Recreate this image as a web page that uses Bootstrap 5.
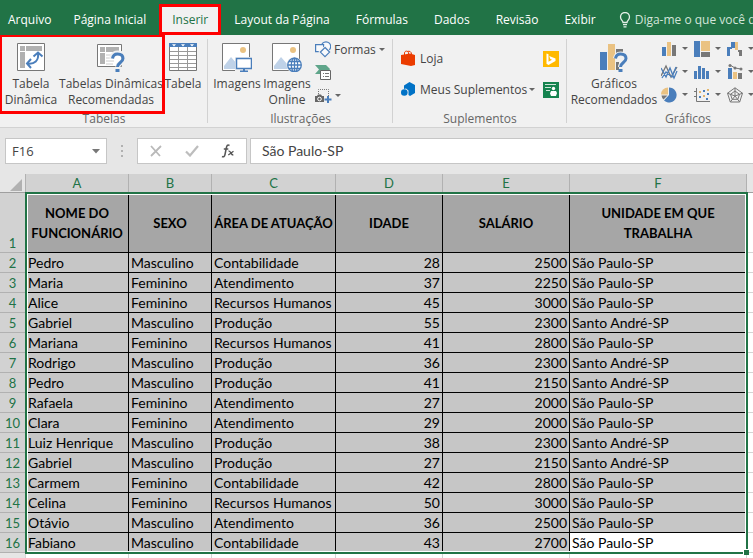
<!DOCTYPE html>
<html lang="pt-BR">
<head>
<meta charset="utf-8">
<meta name="viewport" content="width=device-width, initial-scale=1">
<title>Planilha de funcionários</title>
<link href="https://cdn.jsdelivr.net/npm/bootstrap@5.3.0/dist/css/bootstrap.min.css" rel="stylesheet">
<style>
  :root { --xl-green: #217346; --xl-ribbon: #f1f1f1; --xl-gray: #e6e6e6; }
  body { font-family: "Open Sans", "Noto Sans", sans-serif; font-size: 12px; line-height: 16px; color: #444; background: var(--xl-gray); overflow-x: hidden; }
  button, input { font: inherit; color: inherit; }
  svg { display: block; flex: none; }
  .tabs-bar { background: var(--xl-green); height: 35px; padding-top: 6px; overflow: hidden; }
  .tabs-bar a { color: #fff; text-decoration: none; padding: 6px 13px 7px; white-space: nowrap; }
  .tabs-bar a:first-child { padding-left: 8px; padding-right: 9px; }
  .tabs-bar a.current { background: var(--xl-ribbon); color: var(--xl-green); outline: 3px solid #f00; outline-offset: -1px; margin: 0 2px; padding: 6px 11px 5px; height: 27px; }
  .tabs-bar .tell-me { color: #d3e5da; padding: 0 0 2px 10px; }
  .ribbon { background: var(--xl-ribbon); border-bottom: 1px solid #d2d2d2; height: 93px; overflow: hidden; }
  .ribbon-group { flex: none; position: relative; padding-top: 8px; }
  .ribbon-group + .ribbon-group::before { content: ""; position: absolute; left: -1px; top: 4px; bottom: 4px; width: 1px; background: #d2d2d2; }
  .group-name { color: #666; text-align: center; height: 16px; margin-bottom: 0; }
  .group-body { height: 68px; }
  .g-tables { width: 208px; } .g-illus { width: 185px; } .g-addins { width: 174px; } .g-charts { width: 242px; }
  .tool { background: none; border: 0; padding: 0; display: flex; align-items: center; white-space: nowrap; }
  .tool-big { flex-direction: column; justify-content: flex-start; line-height: 16px; flex: none; }
  .tool-big svg { margin-bottom: 4px; }
  .w-a { width: 62px; } .w-b { width: 98px; } .w-c { width: 46px; } .w-d { width: 50px; } .w-e { width: 94px; }
  .caret { width: 0; height: 0; border: 3px solid transparent; border-top-color: #666; border-bottom: 0; flex: none; }
  .marked { position: absolute; left: -1px; top: -1px; width: 166px; height: 80px; border: 3px solid #f00; pointer-events: none; z-index: 2; }
  .small-tools { margin-top: -5px; padding-left: 3px; }
  .small-tools .tool { height: 23px; gap: 3px; }
  .addin-row { height: 31px; }
  .chart-grid { display: grid; grid-template-columns: repeat(3, 33px); grid-auto-rows: 23px; margin-top: -6px; }
  .chart-grid .tool { gap: 4px; }
  .formula-row { height: 46px; padding: 10px 0 10px 5px; }
  .field { background: #fff; border: 1px solid #c6c6c6; height: 26px; }
  .field input { border: 0; background: none; outline: 0; min-width: 0; padding: 0; }
  .name-box { width: 102px; padding: 0 6px; font-size: 13px; }
  .fx-box { width: 110px; padding: 0 11px; margin-right: 3px; }
  .formula { border-right: 0; padding-left: 11px; font-family: Lato, "Open Sans", sans-serif; font-size: 14px; }
  .dots { margin: 0 14px; width: 2px; }
  .sheet { font-family: Lato, "Open Sans", sans-serif; font-size: 14px; line-height: 18px; position: relative; overflow: hidden; }
  .sheet table { table-layout: fixed; width: 100%; min-width: 753px; border-collapse: separate; border-spacing: 0; color: #000; }
  .c-num { width: 26px; } .c-a { width: 103px; } .c-b { width: 83px; } .c-c { width: 124px; } .c-d { width: 107px; } .c-e { width: 127px; } .c-f { width: 177px; }
  .sheet th, .sheet td { padding: 0; white-space: nowrap; overflow: hidden; }
  .sheet th { font-size: 13px; }
  .sheet thead th { height: 19px; background: #d2d2d2; color: var(--xl-green); font-weight: 400; text-align: center; border-right: 1px solid #b1b1b1; border-bottom: 1px solid #9f9f9f; }
  .sheet thead th:first-child, .sheet thead th:last-child { background: var(--xl-gray); }
  .sheet thead th:last-child { border-right: 0; }
  .sheet thead svg { margin: 3px 0 0 10px; }
  .sheet tbody th { background: #d2d2d2; color: var(--xl-green); font-weight: 400; text-align: center; vertical-align: bottom; border-right: 1px solid #9f9f9f; border-bottom: 1px solid #b1b1b1; }
  .sheet tbody td { background: #c6c6c6; height: 20px; padding-left: 2px; border-right: 1px solid #000; border-bottom: 1px solid #000; }
  .sheet tbody td:nth-child(5), .sheet tbody td:nth-child(6) { text-align: right; padding-right: 2px; }
  .sheet tbody td:last-child { background: #fff; border-right: 0; border-bottom-color: #d4d4d4; }
  .sheet tbody .titles td { height: 60px; background: #a6a6a6; font-size: 13px; font-weight: 700; text-align: center; vertical-align: middle; line-height: 20px; padding: 0; white-space: normal; }
  .sheet tbody .titles td:last-child { background: #fff; }
  .sheet tbody td.active-cell { background: #fff; }
  .sheet tbody .blank td, .sheet tbody .blank th { height: 5px; background: #fff; border-bottom: 0; border-right-color: #d4d4d4; }
  .sheet tbody .blank th { background: var(--xl-gray); }
  .selection { position: absolute; left: 25px; top: 18px; bottom: 4px; width: 723px; border: 2px solid var(--xl-green); box-shadow: inset 0 0 0 1px #fff; pointer-events: none; }
  .selection::after { content: ""; position: absolute; right: -3px; bottom: -3px; width: 6px; height: 6px; background: var(--xl-green); border: solid #fff; border-width: 1px 0 0 1px; }
</style>
<script src="https://cdn.jsdelivr.net/npm/bootstrap@5.3.0/dist/js/bootstrap.bundle.min.js"></script>
</head>
<body>
<nav class="tabs-bar d-flex align-items-start" aria-label="Guias">
  <a href="#">Arquivo</a><a href="#">Página Inicial</a><a href="#" class="current" aria-current="page">Inserir</a><a href="#">Layout da Página</a><a href="#">Fórmulas</a><a href="#">Dados</a><a href="#">Revisão</a><a href="#">Exibir</a>
  <button class="tool tell-me align-self-center gap-1" type="button">
    <svg width="12" height="16" viewBox="0 0 12 16" fill="none" stroke="#e4efe8" stroke-width="1.3"><path d="M4 10.5C4 8.5 1.5 8 1.500 5a4.500 4.500 0 0 1 9 0c0 3-2.500 3.500-2.500 5.500zM4 12.700h4M4.500 14.800h3"/></svg>
    <span>Diga-me o que você d</span></button>
</nav>

<main>
<div class="ribbon d-flex">
  <section class="ribbon-group g-tables">
    <div class="marked"></div>
    <div class="group-body d-flex align-items-start">
      <button class="tool tool-big w-a" type="button">
        <svg width="28" height="29" viewBox="0 0 28 29"><path d="M.5.500h27v27H.5z" fill="#fff" stroke="#777"/><path d="M3 3h5v5H3zm6 0h16v5H9zM3 9h5v16H3z" fill="#b1b1b1"/><path d="M10.500 20.500c7 1 11.500-3 10.500-10" fill="none" stroke="#4a7ebb" stroke-width="2"/><path d="M16.500 13.500l4.500-4 4.500 4M14 16l-4 4.500 4 4.500" fill="none" stroke="#4a7ebb" stroke-width="2"/></svg>
        <span>Tabela</span><span>Dinâmica</span></button>
      <button class="tool tool-big w-b" type="button">
        <svg width="28" height="29" viewBox="0 0 28 29"><path d="M.5 1.500h24v22H.5z" fill="#fff" stroke="#777"/><path d="M3 4h5v5H3zm6 0h13v5H9zM3 10h5v11H3z" fill="#b1b1b1"/><path d="M9 12h7M9 15h6M9 18h8M9 21h7" stroke="#ccc"/><path d="M15 16v-2c1-3 3-4 6-4 4 0 6 2 6 5 0 5-5 4-6 8v2" fill="none" stroke="#f1f1f1" stroke-width="5"/><path d="M15.500 15.500c.5-3 2.500-4.500 5-4.500 3.500 0 5.500 1.500 5.500 4.500 0 4-5.500 4-5.500 8.500" fill="none" stroke="#4a7ebb" stroke-width="3"/><path d="M18.500 26h4v3h-4z" fill="#4a7ebb"/></svg>
        <span>Tabelas Dinâmicas</span><span>Recomendadas</span></button>
      <button class="tool tool-big w-c" type="button">
        <svg width="28" height="29" viewBox="0 0 28 29"><path d="M.5.500h27v27H.5z" fill="#fff" stroke="#777"/><path d="M0 0h28v4H0z" fill="#4a7ebb"/><path d="M3 1.200h4L5 3.400zm9 0h4l-2 2.200zm9 0h4l-2 2.200z" fill="#fff"/><path d="M1 8.500h26M1 12.500h26M1 16.500h26M1 20.500h26M1 24.500h26M9.500 4v23M18.500 4v23" stroke="#999"/></svg>
        <span>Tabela</span></button>
    </div>
    <p class="group-name">Tabelas</p>
  </section>

  <section class="ribbon-group g-illus">
    <div class="group-body d-flex align-items-start ps-1">
      <button class="tool tool-big w-d" type="button">
        <svg width="30" height="29" viewBox="0 0 30 29"><path d="M.5.500h27v27H.5z" fill="#fff" stroke="#777"/><circle cx="21" cy="7" r="3" fill="#eac282"/><path d="M2 26v-3l7-9 7 8v4z" fill="#bfd2e8"/><path d="M13 14h17v15H13z" fill="#f1f1f1"/><path d="M14.500 15.500h15v10h-15z" fill="#fff" stroke="#4a7ebb" stroke-width="1.500"/><path d="M21 26h2v1.500h3V29h-8v-1.500h3z" fill="#4a7ebb"/></svg>
        <span>Imagens</span></button>
      <button class="tool tool-big w-d" type="button">
        <svg width="30" height="29" viewBox="0 0 30 29"><path d="M.5.500h27v27H.5z" fill="#fff" stroke="#777"/><circle cx="21" cy="7" r="3" fill="#eac282"/><path d="M2 26v-3l7-9 7 8v4z" fill="#bfd2e8"/><circle cx="22.500" cy="22" r="8" fill="#f1f1f1"/><g fill="#fff" stroke="#4a7ebb" stroke-width="1.300"><circle cx="22.500" cy="22" r="6.800"/><ellipse cx="22.500" cy="22" rx="3.200" ry="6.800"/><path d="M22.500 15v14M16 22h13M17 18.500h11M17 25.500h11"/></g></svg>
        <span>Imagens</span><span>Online</span></button>
      <div class="small-tools">
        <button class="tool" type="button">
          <svg width="16" height="17" viewBox="0 0 16 17" fill="#f8fafc" stroke="#4a7ebb" stroke-width="1.200"><circle cx="11" cy="5.500" r="4.700"/><path d="M.6 3.600h8v7h-8z"/><path d="M10 6.500l4.600 4.600L10 15.700l-4.600-4.600z" stroke="#f1f1f1" stroke-width="3"/><path d="M10 6.500l4.600 4.600L10 15.700l-4.600-4.600z"/></svg>
          <span>Formas</span><i class="caret"></i></button>
        <button class="tool" type="button" aria-label="SmartArt">
          <svg width="17" height="17" viewBox="0 0 17 17"><path d="M0 1h11l4 4-1 2H5v3H0l4-4.500z" fill="#5fa58a"/><path d="M5.500 6.500h10v9h-10z" fill="#fff" stroke="#666"/><path d="M8 9.500h1M8 12.500h1M10 9.500h4M10 12.500h4" stroke="#777"/></svg></button>
        <button class="tool" type="button" aria-label="Instantâneo">
          <svg width="17" height="17" viewBox="0 0 17 17"><path d="M3.500 7V2.500h10V9" fill="none" stroke="#777" stroke-dasharray="1 1"/><path d="M0 9h2l1-1.500h3L7 9h2v6H0z" fill="#666"/><circle cx="4.500" cy="12" r="1.800" fill="#666" stroke="#fff"/><path d="M12 9h2v2.500h2.500v2H14V16h-2v-2.500H9.500v-2H12z" fill="#4a7ebb"/></svg><i class="caret"></i></button>
      </div>
    </div>
    <p class="group-name">Ilustrações</p>
  </section>

  <section class="ribbon-group g-addins">
    <div class="group-body ps-2 pe-2">
      <div class="addin-row d-flex justify-content-between">
        <button class="tool gap-1" type="button">
          <svg width="15" height="17" viewBox="0 0 15 17"><path d="M0 5l9-1.500 5 1.500v10l-4 1L0 14z" fill="#eb3c00"/><path d="M3.500 6V3c0-2.500 4-2.500 4 0v2M6.500 1.500C8.500.5 10.500 2 10.500 4" fill="none" stroke="#eb3c00"/></svg>
          <span>Loja</span></button>
        <button class="tool" type="button" aria-label="Bing Mapas">
          <svg width="16" height="16" viewBox="0 0 16 16"><path d="M0 0h16v16H0z" fill="#ffb900"/><path d="M3.500 2.500l2 .8v7.400l3.500-2-1.700-.8L6.200 5l6.300 2.400v2.700L5.500 14l-2-1.300z" fill="#fff"/></svg></button>
      </div>
      <div class="addin-row d-flex justify-content-between">
        <button class="tool gap-1" type="button">
          <svg width="15" height="15" viewBox="0 0 15 15"><path d="M3 3.500L8.500 0 14 3v8l-5 3-1.500-1V8.500L5 6.500 3 7z" fill="#0072c6"/><circle cx="3.300" cy="10.500" r="3.300" fill="#0072c6"/></svg>
          <span>Meus Suplementos</span></button><button class="tool ms-auto me-2" type="button" aria-label="Abrir Meus Suplementos"><i class="caret"></i></button>
        <button class="tool" type="button" aria-label="Gráfico de pessoas">
          <svg width="16" height="16" viewBox="0 0 16 16"><path d="M0 0h16v16H0z" fill="#15834f"/><path d="M2 2.500h11M2 5.500h6M3 8.500h4" stroke="#cfe6da"/><circle cx="10.500" cy="6.500" r="1.700" fill="#fff"/><path d="M8 9h5l1 2-1 3H8l-1-2.500z" fill="#fff"/></svg></button>
      </div>
    </div>
    <p class="group-name">Suplementos</p>
  </section>

  <section class="ribbon-group g-charts">
    <div class="group-body d-flex align-items-start">
      <button class="tool tool-big w-e" type="button">
        <svg width="28" height="29" viewBox="0 0 28 29"><path d="M0 9h7v18H0z" fill="#4a7ebb"/><path d="M8 1h7v26H8z" fill="#eac282"/><path d="M16 6h7v4h-7zm0 13h3v8h-3z" fill="#777"/><path d="M15.500 15.500c.5-3 2.500-4.500 5-4.500 3.500 0 5.500 1.500 5.500 4.500 0 4-5.500 4-5.500 8.500" fill="none" stroke="#f1f1f1" stroke-width="5"/><path d="M15.500 15.500c.5-3 2.500-4.500 5-4.500 3.500 0 5.500 1.500 5.500 4.500 0 4-5.500 4-5.500 8.500" fill="none" stroke="#4a7ebb" stroke-width="3"/><path d="M18.500 26h4v3h-4z" fill="#4a7ebb"/></svg>
        <span>Gráficos</span><span>Recomendados</span></button>
      <div class="chart-grid">
        <button class="tool" type="button" aria-label="Colunas"><svg width="17" height="16" viewBox="0 0 17 16"><path d="M1 6h4v9H1z" fill="#4a7ebb"/><path d="M6 1h4v14H6z" fill="#eac282"/><path d="M11 4h4v11h-4z" fill="#777"/></svg><i class="caret"></i></button>
        <button class="tool" type="button" aria-label="Hierarquia"><svg width="17" height="16" viewBox="0 0 17 16"><path d="M0 0h6v16H0z" fill="#4a7ebb"/><path d="M7 0h9v10H7z" fill="#eac282"/><path d="M7 11h9v5H7z" fill="#777"/></svg><i class="caret"></i></button>
        <button class="tool" type="button" aria-label="Cascata"><svg width="17" height="16" viewBox="0 0 17 16"><path d="M0 6h3v9H0zm0 0h5v2H0z" fill="#4a7ebb"/><path d="M4 1h4v6H4z" fill="#4a7ebb"/><path d="M8 1h3v8H8z" fill="#eac282"/><path d="M11 9h4v6h-3v-4h-1z" fill="#777"/></svg><i class="caret"></i></button>
        <button class="tool" type="button" aria-label="Linhas"><svg width="17" height="16" viewBox="0 0 17 16" fill="none"><path d="M0 12L5 2l5 11 6-10" stroke="#777" stroke-width="1.300"/><path d="M0 4l5 9 4-9 4 10 3-7M1 14l4-6 6 5 4-10" stroke="#4a7ebb" stroke-width="1.300"/></svg><i class="caret"></i></button>
        <button class="tool" type="button" aria-label="Estatística"><svg width="17" height="16" viewBox="0 0 17 16"><path d="M0 7h3v8H0zm4-5h3v13H4zm4 2h3v11H8zm4 3h3v8h-3z" fill="#4a7ebb"/></svg><i class="caret"></i></button>
        <button class="tool" type="button" aria-label="Combinação"><svg width="17" height="16" viewBox="0 0 17 16"><path d="M1 4h4v11H1z" fill="#4a7ebb"/><path d="M6 8h4v7H6z" fill="#eac282"/><path d="M11 9h4v6h-4z" fill="#777"/><path d="M3 1l5 3 6 1" stroke="#777" fill="none"/><circle cx="3" cy="1.500" r="1.500" fill="#777"/><circle cx="8" cy="4" r="1.500" fill="#777"/><circle cx="14" cy="5" r="1.500" fill="#777"/></svg><i class="caret"></i></button>
        <button class="tool" type="button" aria-label="Pizza"><svg width="17" height="16" viewBox="0 0 17 16"><path d="M8 8V.5A7.500 7.500 0 1 1 3 13.500z" fill="#4a7ebb"/><path d="M7 7.500H0A7 7 0 0 1 7 .5z" fill="#eac282"/><path d="M6.500 8.500l-4 4A6.500 6.500 0 0 1 .5 8.500z" fill="#777"/></svg><i class="caret"></i></button>
        <button class="tool" type="button" aria-label="Dispersão"><svg width="17" height="16" viewBox="0 0 17 16"><path d="M2.500 1v13.500H16M0 4.500h2M0 9.500h2" fill="none" stroke="#777"/><path d="M5 9h2v2H5zm4-6h2v2H9zm4 3h2v2h-2zm-1 5h2v2h-2z" fill="#4a7ebb"/><path d="M5 4h2v2H5zm4 4h2v2H9zm4-6h2v2h-2z" fill="#e3b66e"/></svg><i class="caret"></i></button>
        <button class="tool" type="button" aria-label="Radar"><svg width="17" height="16" viewBox="0 0 17 16" fill="none" stroke="#777"><path d="M8 .8l7.500 5.400-2.800 8.800H3.300L.5 6.200zM8 4l4.500 3.300-1.700 5H5.200l-1.700-5zM8 .8V9M15.500 6.200L8 9l4.700 6M3.300 15L8 9 .5 6.200"/></svg><i class="caret"></i></button>
      </div>
    </div>
    <p class="group-name">Gráficos</p>
  </section>
</div>

<div class="formula-row d-flex align-items-center">
  <div class="field name-box d-flex align-items-center">
    <input class="flex-grow-1" type="text" value="F16" aria-label="Caixa de nome"><svg width="8" height="5" viewBox="0 0 8 5"><path d="M0 0h8L4 4.500z" fill="#777"/></svg>
  </div>
  <svg class="dots" width="2" height="12" viewBox="0 0 2 12"><path d="M0 0h2v2H0zm0 5h2v2H0zm0 5h2v2H0z" fill="#b1b1b1"/></svg>
  <div class="field fx-box d-flex align-items-center justify-content-between">
    <button class="tool" type="button" aria-label="Cancelar"><svg width="14" height="12" viewBox="0 0 14 12"><path d="M2 1l9 10M12 1L2 11" stroke="#b9b9b9" stroke-width="1.800"/></svg></button>
    <button class="tool" type="button" aria-label="Inserir"><svg width="14" height="12" viewBox="0 0 14 12"><path d="M1 6.500l4 4L13 1" stroke="#bdbdbd" stroke-width="2.200" fill="none"/></svg></button>
    <button class="tool" type="button" aria-label="Inserir função"><svg width="14" height="14" viewBox="0 0 14 14" fill="none" stroke="#555"><path d="M8.500 1.500C6.500.3 5.800 1.500 5.300 4L4 10.500C3.600 12.700 2.500 13.300 1 12.500M2.800 5h4.500" stroke-width="1.500"/><path d="M7.500 7.200c2.500-.8 2 3.800 4.800 3.800M12.500 7.300L7.300 11" stroke-width="1.300"/></svg></button>
  </div>
  <div class="field formula d-flex align-items-center flex-grow-1"><input class="flex-grow-1" type="text" value="São Paulo-SP" aria-label="Barra de fórmulas"></div>
</div>

<div class="sheet">
  <table>
    <colgroup><col class="c-num"><col class="c-a"><col class="c-b"><col class="c-c"><col class="c-d"><col class="c-e"><col class="c-f"><col></colgroup>
    <thead><tr><th aria-label="Selecionar tudo"><svg width="12" height="12" viewBox="0 0 12 12"><path d="M12 0v12H0z" fill="#b1b1b1"/></svg></th><th>A</th><th>B</th><th>C</th><th>D</th><th>E</th><th>F</th><th></th></tr></thead>
    <tbody>
      <tr class="titles"><th>1</th><td>NOME DO FUNCIONÁRIO</td><td>SEXO</td><td>ÁREA DE ATUAÇÃO</td><td>IDADE</td><td>SALÁRIO</td><td>UNIDADE EM QUE<br>TRABALHA</td><td></td></tr>
      <tr><th>2</th><td>Pedro</td><td>Masculino</td><td>Contabilidade</td><td>28</td><td>2500</td><td>São Paulo-SP</td><td></td></tr>
      <tr><th>3</th><td>Maria</td><td>Feminino</td><td>Atendimento</td><td>37</td><td>2250</td><td>São Paulo-SP</td><td></td></tr>
      <tr><th>4</th><td>Alice</td><td>Feminino</td><td>Recursos Humanos</td><td>45</td><td>3000</td><td>São Paulo-SP</td><td></td></tr>
      <tr><th>5</th><td>Gabriel</td><td>Masculino</td><td>Produção</td><td>55</td><td>2300</td><td>Santo André-SP</td><td></td></tr>
      <tr><th>6</th><td>Mariana</td><td>Feminino</td><td>Recursos Humanos</td><td>41</td><td>2800</td><td>São Paulo-SP</td><td></td></tr>
      <tr><th>7</th><td>Rodrigo</td><td>Masculino</td><td>Produção</td><td>36</td><td>2300</td><td>Santo André-SP</td><td></td></tr>
      <tr><th>8</th><td>Pedro</td><td>Masculino</td><td>Produção</td><td>41</td><td>2150</td><td>Santo André-SP</td><td></td></tr>
      <tr><th>9</th><td>Rafaela</td><td>Feminino</td><td>Atendimento</td><td>27</td><td>2000</td><td>São Paulo-SP</td><td></td></tr>
      <tr><th>10</th><td>Clara</td><td>Feminino</td><td>Atendimento</td><td>29</td><td>2000</td><td>São Paulo-SP</td><td></td></tr>
      <tr><th>11</th><td>Luiz Henrique</td><td>Masculino</td><td>Produção</td><td>38</td><td>2300</td><td>Santo André-SP</td><td></td></tr>
      <tr><th>12</th><td>Gabriel</td><td>Masculino</td><td>Produção</td><td>27</td><td>2150</td><td>Santo André-SP</td><td></td></tr>
      <tr><th>13</th><td>Carmem</td><td>Feminino</td><td>Contabilidade</td><td>42</td><td>2800</td><td>São Paulo-SP</td><td></td></tr>
      <tr><th>14</th><td>Celina</td><td>Feminino</td><td>Recursos Humanos</td><td>50</td><td>3000</td><td>São Paulo-SP</td><td></td></tr>
      <tr><th>15</th><td>Otávio</td><td>Masculino</td><td>Atendimento</td><td>36</td><td>2500</td><td>São Paulo-SP</td><td></td></tr>
      <tr><th>16</th><td>Fabiano</td><td>Masculino</td><td>Contabilidade</td><td>43</td><td>2700</td><td class="active-cell">São Paulo-SP</td><td></td></tr>
      <tr class="blank"><th></th><td></td><td></td><td></td><td></td><td></td><td></td><td></td></tr>
    </tbody>
  </table>
  <div class="selection"></div>
</div>
</main>
</body>
</html>
